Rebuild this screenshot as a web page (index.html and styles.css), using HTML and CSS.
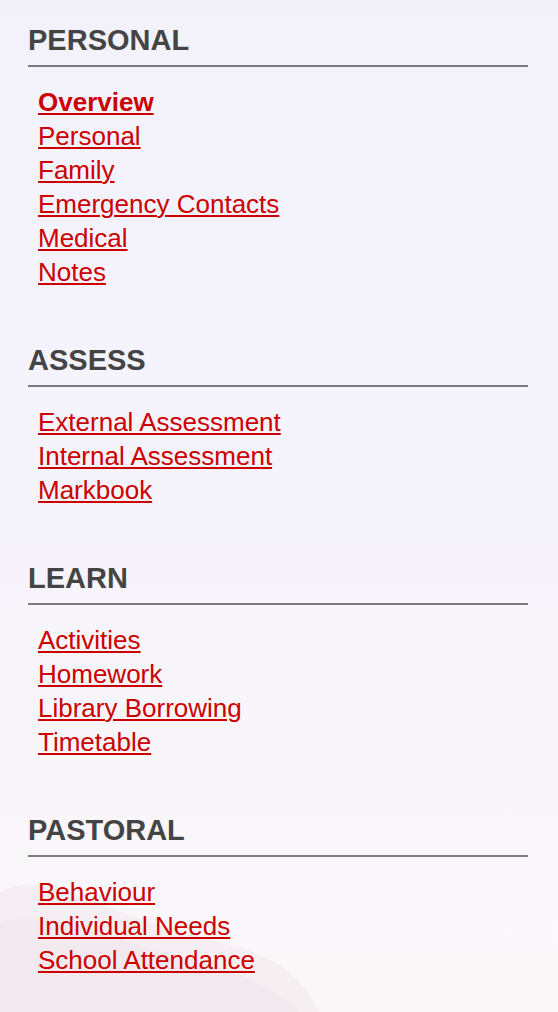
FILE: index.html
```html
<!DOCTYPE html>
<html lang="en">
<head>
<meta charset="utf-8">
<title>Student menu</title>
<link rel="stylesheet" href="styles.css">
</head>
<body>
<svg class="backdrop" viewBox="0 0 558 160" preserveAspectRatio="none" aria-hidden="true">
  <path d="M0 40 C20 30 40 30 60 38 C90 48 120 60 150 70 C180 78 210 88 240 96 C270 104 300 120 320 160 L0 160 Z" fill="#ecdfe4" opacity="0.35"/>
  <path d="M0 70 C30 62 60 66 100 80 C140 94 180 104 220 116 C250 126 280 140 300 160 L0 160 Z" fill="#eadde2" opacity="0.25"/>
</svg>
<nav class="menu">
  <section class="group">
    <h2 class="group-title">PERSONAL</h2>
    <ul class="links">
      <li><a href="#" class="active">Overview</a></li>
      <li><a href="#">Personal</a></li>
      <li><a href="#">Family</a></li>
      <li><a href="#">Emergency Contacts</a></li>
      <li><a href="#">Medical</a></li>
      <li><a href="#">Notes</a></li>
    </ul>
  </section>
  <section class="group">
    <h2 class="group-title">ASSESS</h2>
    <ul class="links">
      <li><a href="#">External Assessment</a></li>
      <li><a href="#">Internal Assessment</a></li>
      <li><a href="#">Markbook</a></li>
    </ul>
  </section>
  <section class="group">
    <h2 class="group-title">LEARN</h2>
    <ul class="links">
      <li><a href="#">Activities</a></li>
      <li><a href="#">Homework</a></li>
      <li><a href="#">Library Borrowing</a></li>
      <li><a href="#">Timetable</a></li>
    </ul>
  </section>
  <section class="group">
    <h2 class="group-title">PASTORAL</h2>
    <ul class="links">
      <li><a href="#">Behaviour</a></li>
      <li><a href="#">Individual Needs</a></li>
      <li><a href="#">School Attendance</a></li>
    </ul>
  </section>
</nav>
</body>
</html>
```

FILE: styles.css
```css
html, body {
  margin: 0;
  padding: 0;
}

body {
  min-height: 1012px;
  background: linear-gradient(180deg, #f3f2fb 0%, #f5f3fb 45%, #f9f6fa 75%, #fbf7f9 100%);
  font-family: "Liberation Sans", Arial, Helvetica, sans-serif;
  position: relative;
  overflow: hidden;
}

.backdrop {
  position: absolute;
  left: 0;
  bottom: 0;
  width: 558px;
  height: 160px;
  z-index: 0;
}

.menu {
  position: relative;
  z-index: 1;
  display: flex;
  flex-direction: column;
  gap: 54px;
  padding: 23px 30px 0 28px;
}

.group-title {
  margin: 0;
  font-size: 29px;
  line-height: 34px;
  font-weight: bold;
  color: #444444;
  padding-bottom: 8px;
  border-bottom: 2px solid #7b7a7e;
}

.links {
  list-style: none;
  margin: 18px 0 0 0;
  padding: 0 0 0 10px;
}

.links li {
  font-size: 26px;
  line-height: 34px;
}

.links a {
  color: #cc0000;
  text-decoration: underline;
  text-decoration-thickness: 2px;
  text-underline-offset: 2px;
}

.links a.active {
  font-weight: bold;
}
```
